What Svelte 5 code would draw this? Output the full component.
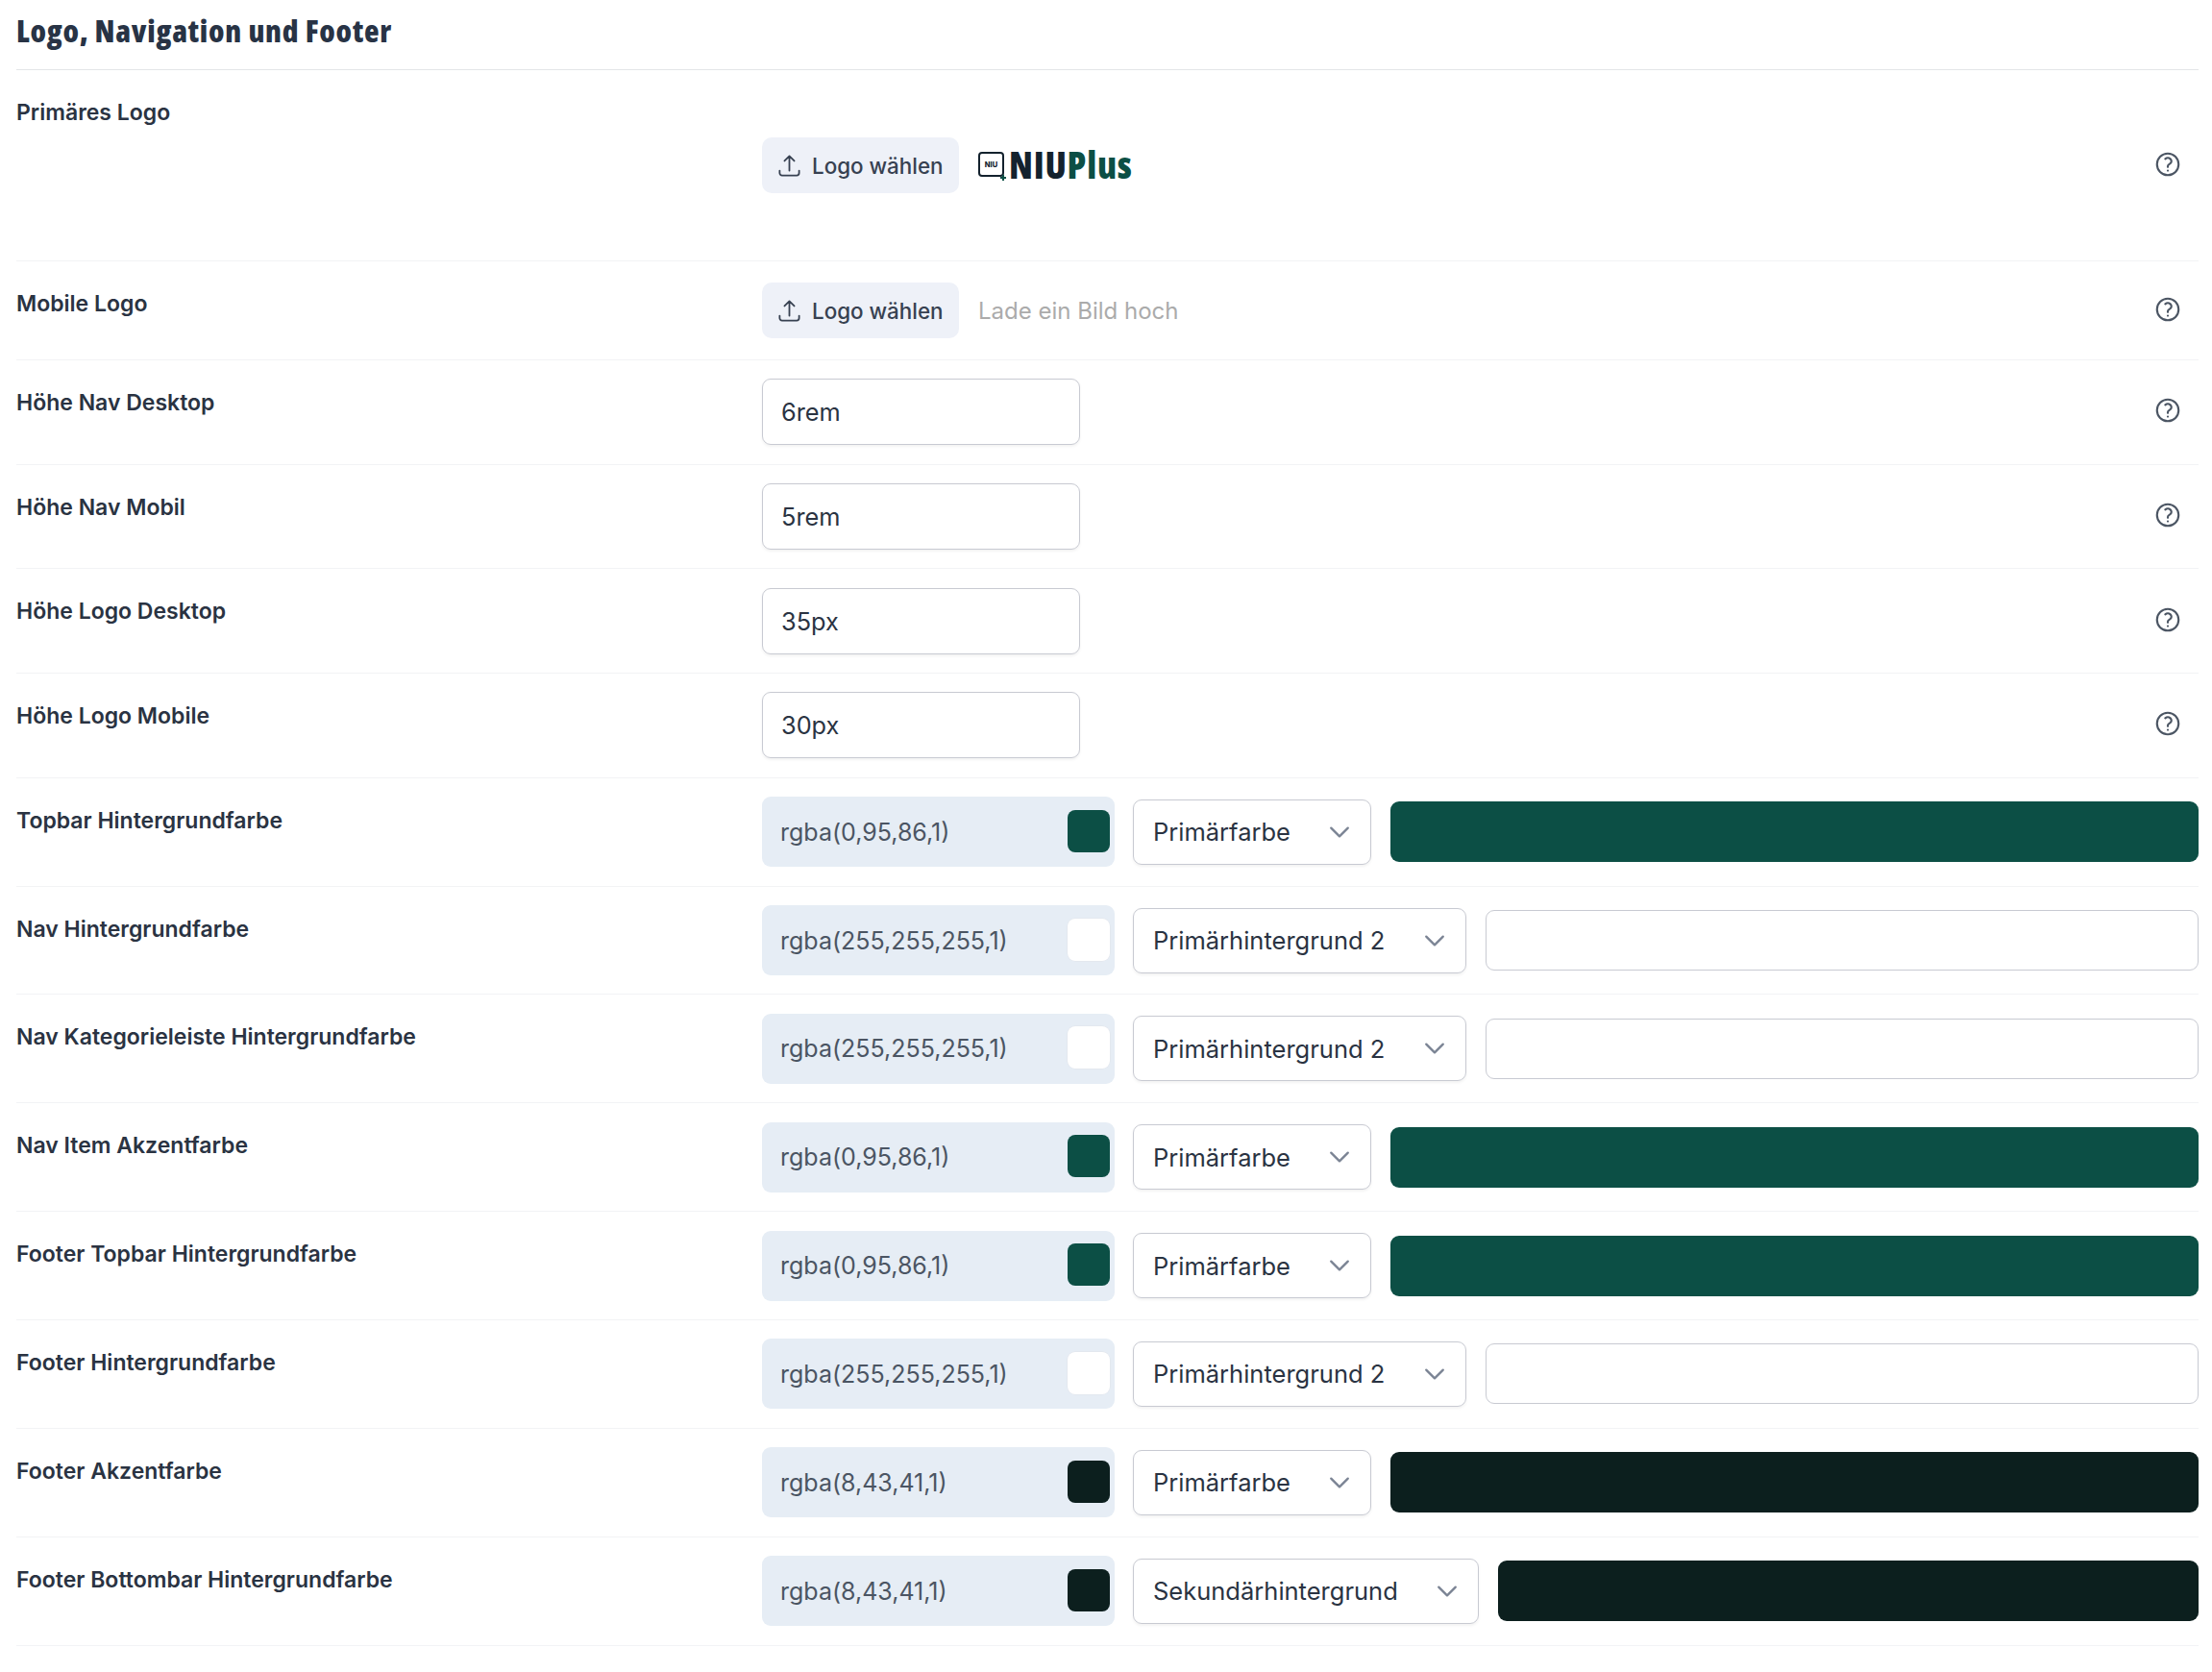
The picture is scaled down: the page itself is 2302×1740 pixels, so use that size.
<script lang="ts">
	type Row = { label: string; value: string; name?: string; swatch?: string };

	const sizeRows = [
		{ label: 'Höhe Nav Desktop', value: '6rem' },
		{ label: 'Höhe Nav Mobil', value: '5rem' },
		{ label: 'Höhe Logo Desktop', value: '35px' },
		{ label: 'Höhe Logo Mobile', value: '30px' }
	];

	const green = '#0c4f45';
	const dark = '#0c1f1e';

	const colorRows: Row[] = [
		{ label: 'Topbar Hintergrundfarbe', value: 'rgba(0,95,86,1)', name: 'Primärfarbe', swatch: green },
		{ label: 'Nav Hintergrundfarbe', value: 'rgba(255,255,255,1)', name: 'Primärhintergrund 2', swatch: '#fff' },
		{ label: 'Nav Kategorieleiste Hintergrundfarbe', value: 'rgba(255,255,255,1)', name: 'Primärhintergrund 2', swatch: '#fff' },
		{ label: 'Nav Item Akzentfarbe', value: 'rgba(0,95,86,1)', name: 'Primärfarbe', swatch: green },
		{ label: 'Footer Topbar Hintergrundfarbe', value: 'rgba(0,95,86,1)', name: 'Primärfarbe', swatch: green },
		{ label: 'Footer Hintergrundfarbe', value: 'rgba(255,255,255,1)', name: 'Primärhintergrund 2', swatch: '#fff' },
		{ label: 'Footer Akzentfarbe', value: 'rgba(8,43,41,1)', name: 'Primärfarbe', swatch: dark },
		{ label: 'Footer Bottombar Hintergrundfarbe', value: 'rgba(8,43,41,1)', name: 'Sekundärhintergrund', swatch: dark }
	];

	function selectClass(name?: string) {
		if (name === 'Primärfarbe') return 'select short';
		if (name === 'Sekundärhintergrund') return 'select wide';
		return 'select';
	}
</script>

{#snippet help()}
	<svg class="help" viewBox="0 0 24 24" fill="none" stroke="currentColor" stroke-width="1.7" stroke-linecap="round" stroke-linejoin="round">
		<path d="M9.879 7.519c1.171-1.025 3.071-1.025 4.242 0 1.172 1.025 1.172 2.687 0 3.712-.203.179-.43.326-.67.442-.745.361-1.45.999-1.45 1.827v.75M21 12a9 9 0 1 1-18 0 9 9 0 0 1 18 0Zm-9 5.25h.008v.008H12v-.008Z" />
	</svg>
{/snippet}

{#snippet upload()}
	<button class="upload" type="button">
		<svg viewBox="0 0 24 24" fill="none" stroke="currentColor" stroke-width="1.6" stroke-linecap="round" stroke-linejoin="round">
			<path d="M3 16.5v2.25A2.25 2.25 0 0 0 5.25 21h13.5A2.25 2.25 0 0 0 21 18.75V16.5m-13.5-9L12 3m0 0 4.5 4.5M12 3v13.5" />
		</svg>
		Logo wählen
	</button>
{/snippet}

<section class="panel">
	<h2>Logo, Navigation und Footer</h2>

	<div class="row primary">
		<div class="label">Primäres Logo</div>
		<div class="control">
			{@render upload()}
			<div class="logo">
				<span class="mark"><span>NIU</span><i></i></span>
				<span class="word">NIU<b>Plus</b></span>
			</div>
			{@render help()}
		</div>
	</div>

	<div class="row mobile">
		<div class="label">Mobile Logo</div>
		<div class="control">
			{@render upload()}
			<span class="hint">Lade ein Bild hoch</span>
			{@render help()}
		</div>
	</div>

	{#each sizeRows as row}
		<div class="row size">
			<div class="label">{row.label}</div>
			<div class="control">
				<div class="input">{row.value}</div>
				{@render help()}
			</div>
		</div>
	{/each}

	{#each colorRows as row}
		<div class="row color">
			<div class="label">{row.label}</div>
			<div class="control">
				<div class="picker">
					<span>{row.value}</span>
					<i class="chip" class:light={row.swatch === '#fff'} style="background: {row.swatch}"></i>
				</div>
				<div class={selectClass(row.name)}>
					<span>{row.name}</span>
					<svg viewBox="0 0 24 24" fill="none" stroke="currentColor" stroke-width="2" stroke-linecap="round" stroke-linejoin="round">
						<path d="m19.5 8.25-7.5 7.5-7.5-7.5" />
					</svg>
				</div>
				<div class="bar" class:blank={row.swatch === '#fff'} style="background: {row.swatch}"></div>
			</div>
		</div>
	{/each}
</section>

<style>
	:global(body) {
		background: #fff;
		font-family: Inter, 'Liberation Sans', sans-serif;
		color: #2a3342;
	}

	.panel {
		width: 2271px;
		height: 1740px;
		margin-left: 17px;
		box-sizing: border-box;
	}

	h2 {
		margin: 0;
		height: 73px;
		box-sizing: border-box;
		padding-top: 12px;
		border-bottom: 1.5px solid #e3e5e8;
		font-family: 'Open Sans', sans-serif;
		font-stretch: 75%;
		font-size: 32px;
		line-height: 40px;
		font-weight: 800;
		letter-spacing: 0.75px;
		color: #283345;
	}

	.row {
		display: flex;
		box-sizing: border-box;
		border-bottom: 1.5px solid #f2f3f5;
	}

	.row.primary { height: 199px; }
	.row.mobile { height: 103px; }
	.row.size { height: 108.7px; }
	.row.color { height: 112.87px; }

	.label {
		flex: 0 0 776px;
		padding-top: 29px;
		font-size: 23px;
		line-height: 30px;
		font-weight: 600;
		color: #2a3342;
	}

	.control {
		flex: 1;
		display: flex;
		align-items: center;
		min-width: 0;
	}

	.help {
		width: 30px;
		height: 30px;
		margin-left: auto;
		margin-right: 17px;
		margin-bottom: 3px;
		color: #4b5563;
	}

	.upload {
		display: flex;
		align-items: center;
		gap: 10px;
		width: 205px;
		height: 58px;
		padding: 0 0 0 15px;
		box-sizing: border-box;
		border: 0;
		border-radius: 10px;
		background: #eef1f8;
		color: #374151;
		font: 500 22.4px Inter, sans-serif;
		white-space: nowrap;
	}

	.upload svg {
		width: 27px;
		height: 27px;
		flex: none;
	}

	.hint {
		margin-left: 20px;
		font-size: 24px;
		color: #ababab;
	}

	.logo {
		display: flex;
		align-items: center;
		gap: 5px;
		margin-left: 20px;
		margin-top: -2px;
	}

	.mark {
		position: relative;
		display: flex;
		align-items: center;
		justify-content: center;
		width: 27px;
		height: 26px;
		box-sizing: border-box;
		border: 2px solid #14222e;
		border-radius: 4px;
		font-size: 7.5px;
		font-weight: 800;
		color: #14222e;
	}

	.mark i {
		position: absolute;
		right: -4px;
		bottom: -4px;
		width: 6px;
		height: 2px;
		background: #0c4f45;
	}

	.mark i::after {
		content: '';
		position: absolute;
		left: 2px;
		top: -2px;
		width: 2px;
		height: 6px;
		background: #0c4f45;
	}

	.word {
		font-family: 'Open Sans', sans-serif;
		font-stretch: 75%;
		font-size: 38px;
		line-height: 40px;
		font-weight: 800;
		letter-spacing: 0.8px;
		color: #14222e;
	}

	.word b {
		font-weight: 800;
		color: #0c4f45;
	}

	.input {
		display: flex;
		align-items: center;
		width: 331px;
		height: 69px;
		padding-left: 19px;
		box-sizing: border-box;
		border: 1.5px solid #c8cad2;
		border-radius: 9px;
		box-shadow: 0 1.5px 3px rgba(0, 0, 0, 0.05);
		font-size: 25.3px;
		color: #2a3342;
	}

	.picker {
		display: flex;
		align-items: center;
		justify-content: space-between;
		flex: none;
		width: 367px;
		height: 73px;
		padding: 0 5px 0 19px;
		box-sizing: border-box;
		border-radius: 9px;
		background: #e6edf5;
		font-size: 25px;
		color: #4b5563;
	}

	.chip {
		width: 44px;
		height: 44px;
		margin-top: -2px;
		border-radius: 8px;
	}

	.chip.light {
		box-shadow: 0 0 0 0.5px #dfe3ea;
	}

	.select {
		display: flex;
		align-items: center;
		justify-content: space-between;
		flex: none;
		width: 347px;
		height: 68px;
		margin-left: 19px;
		padding: 0 18px 0 20px;
		box-sizing: border-box;
		border: 1.5px solid #c8cad2;
		border-radius: 9px;
		box-shadow: 0 1.5px 3px rgba(0, 0, 0, 0.05);
		font-size: 25.5px;
		color: #2a3342;
	}

	.select.short { width: 248px; }
	.select.wide { width: 360px; }

	.select svg {
		width: 28px;
		height: 28px;
		flex: none;
		color: #7b8494;
	}

	.bar {
		flex: 1;
		height: 63px;
		margin-left: 19.5px;
		border-radius: 9px;
	}

	.bar.blank {
		box-sizing: border-box;
		border: 1.5px solid #c8cad2;
	}
</style>
